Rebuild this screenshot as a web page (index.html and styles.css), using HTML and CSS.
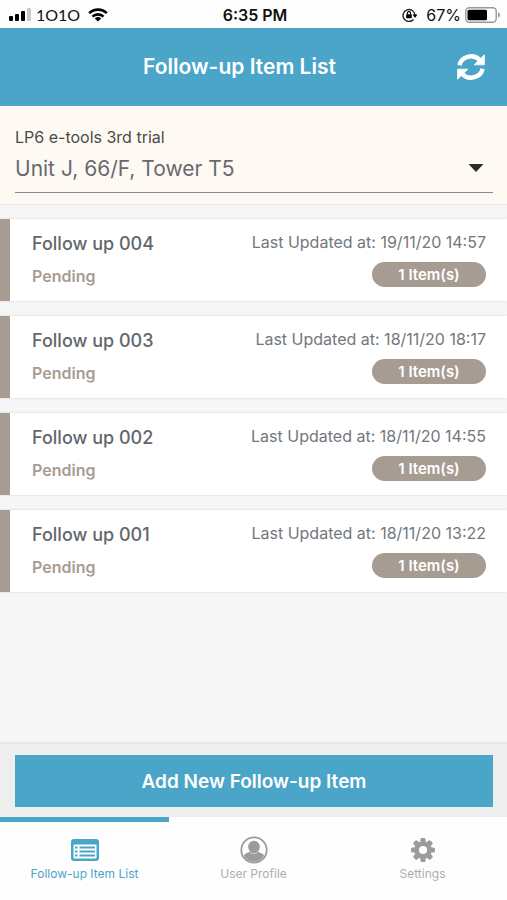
FILE: index.html
```html
<!DOCTYPE html>
<html lang="en">
<head>
<meta charset="utf-8">
<meta name="viewport" content="width=device-width, initial-scale=1">
<title>Follow-up Item List</title>
<link rel="stylesheet" href="styles.css">
</head>
<body>
<div class="app">
  <div class="status">
    <div class="status-side">
      <svg width="23" height="14" viewBox="0 0 23 14" aria-hidden="true"><rect x="0" y="8" width="4" height="5" rx="1"/><rect x="6" y="6" width="4" height="7" rx="1"/><rect x="12" y="3" width="4" height="10" rx="1"/><rect x="18" y="0" width="4" height="13" rx="1" fill="#c9c9c9"/></svg>
      <span class="carrier">1O1O</span>
      <svg class="wifi" width="20" height="14" viewBox="0 0 20 14" fill="none" stroke="#000" stroke-width="2.6" aria-hidden="true"><path d="M1.2 5.2C6 .4 14 .4 18.8 5.2"/><path d="M4.5 8.6c3-3 8-3 11 0"/><path d="M10 13.5 6.8 10.4c1.8-1.8 4.6-1.8 6.4 0z" fill="#000" stroke="none"/></svg>
    </div>
    <span class="time">6:35 PM</span>
    <div class="status-side status-end">
      <svg width="16" height="14" viewBox="0 0 16 14" aria-hidden="true"><path d="M11.5 11.5A6 6 0 1 1 13 7" fill="none" stroke="#222" stroke-width="1.4"/><path d="M10.5 6.5h5L13 10z"/><rect x="4.2" y="6.3" width="5.6" height="4" rx=".5"/><path d="M5.4 6.5V5.2a1.6 1.6 0 0 1 3.2 0v1.3" fill="none" stroke="#000" stroke-width="1.1"/></svg>
      <span class="percent">67%</span>
      <svg width="36" height="16" viewBox="0 0 36 16" aria-hidden="true"><rect x=".8" y=".8" width="30.4" height="14.4" rx="3.5" fill="#fff" stroke="#999" stroke-width="1.4"/><rect x="2.5" y="2.8" width="19.5" height="10.4" rx="1.5"/><path d="M33 5.5c2.6.8 2.6 4.2 0 5z" fill="#999"/></svg>
    </div>
  </div>

  <header class="header">
    <h1>Follow-up Item List</h1>
    <button class="refresh" type="button" aria-label="Refresh">
      <svg width="28" height="28" viewBox="0 0 28 28" fill="#fff" aria-hidden="true"><g id="half"><path d="M2.4 12.2A11.7 10.8 0 0 1 22.5 6.8" fill="none" stroke="#fff" stroke-width="4.4"/><path d="M27.4 1.8v10H17.2z" stroke="#fff" stroke-width=".8" stroke-linejoin="round"/></g><use href="#half" transform="rotate(180 14 14)"/></svg>
    </button>
  </header>

  <section class="filter">
    <label for="unit">LP6 e-tools 3rd trial</label>
    <div class="select">
      <select id="unit"><option>Unit J, 66/F, Tower T5</option></select>
      <svg class="caret" width="16" height="8" viewBox="0 0 16 8" aria-hidden="true"><path d="M.5 0h15L8 8z" fill="#2c2c2c"/></svg>
    </div>
  </section>

  <main class="list">
    <article class="card">
      <div class="line"><h2>Follow up 004</h2><span class="date">Last Updated at: 19/11/20 14:57</span></div>
      <div class="line"><span class="state">Pending</span><span class="badge">1 Item(s)</span></div>
    </article>
    <article class="card">
      <div class="line"><h2>Follow up 003</h2><span class="date">Last Updated at: 18/11/20 18:17</span></div>
      <div class="line"><span class="state">Pending</span><span class="badge">1 Item(s)</span></div>
    </article>
    <article class="card">
      <div class="line"><h2>Follow up 002</h2><span class="date">Last Updated at: 18/11/20 14:55</span></div>
      <div class="line"><span class="state">Pending</span><span class="badge">1 Item(s)</span></div>
    </article>
    <article class="card">
      <div class="line"><h2>Follow up 001</h2><span class="date">Last Updated at: 18/11/20 13:22</span></div>
      <div class="line"><span class="state">Pending</span><span class="badge">1 Item(s)</span></div>
    </article>
  </main>

  <div class="actions"><button class="add" type="button">Add New Follow-up Item</button></div>

  <nav class="tabs">
    <a class="tab active" href="#list" aria-current="page">
      <svg width="28" height="28" viewBox="0 0 28 28" aria-hidden="true"><rect x="0" y="3" width="28" height="22" rx="3" fill="#4aa5c9"/><rect x="2.5" y="8.5" width="23" height="14" rx="1" fill="#fff"/><path d="M4 11.5h2.5M4 15.5h2.5M4 19.5h2.5M8.5 11.5H24M8.5 15.5H24M8.5 19.5H24" stroke="#4aa5c9" stroke-width="2"/></svg>
      <span>Follow-up Item List</span>
    </a>
    <a class="tab" href="#profile">
      <svg width="28" height="28" viewBox="0 0 28 28" fill="#9b9b9b" aria-hidden="true"><circle cx="14" cy="14" r="12.7" fill="none" stroke="#9b9b9b" stroke-width="1.8"/><ellipse cx="14" cy="11" rx="5.8" ry="6.2"/><path d="M4 19.5c1-2.3 3.7-2.6 5.8-3.7 2.4 2.5 6 2.5 8.4 0 2.1 1.1 4.8 1.4 5.8 3.7-4.2 8.2-15.8 8.2-20 0z"/></svg>
      <span>User Profile</span>
    </a>
    <a class="tab" href="#settings">
      <svg width="28" height="28" viewBox="0 0 28 28" fill="#9b9b9b" aria-hidden="true"><g id="teeth"><rect x="11.4" y="2" width="5.2" height="24" rx="1.6"/><rect x="2" y="11.4" width="24" height="5.2" rx="1.6"/></g><use href="#teeth" transform="rotate(45 14 14)"/><circle cx="14" cy="14" r="8.8"/><circle cx="14" cy="14" r="4" fill="#fff"/></svg>
      <span>Settings</span>
    </a>
  </nav>
</div>
</body>
</html>
```

FILE: styles.css
```css
* { box-sizing: border-box; }

body {
  margin: 0;
  font-family: Inter, "Liberation Sans", sans-serif;
  color: #62676d;
  background: #f6f6f6;
}

h1, h2 { margin: 0; }
svg { display: block; flex: none; }
button, select { font: inherit; }

.app { display: flex; flex-direction: column; min-height: 100vh; }

.status {
  display: grid;
  grid-template-columns: 1fr auto 1fr;
  align-items: center;
  height: 28px;
  padding: 2px 6px 0 9px;
  background: #fdfdfd;
  color: #111;
}
.status-side { display: flex; align-items: center; gap: 4px; }
.status-end { justify-content: flex-end; }
.carrier { font-family: Lato, sans-serif; font-size: 16px; line-height: 20px; }
.wifi { margin-left: 4px; }
.time { font-size: 16px; font-weight: 600; line-height: 20px; }
.percent { margin-left: 4px; font-size: 16px; line-height: 20px; }

.header {
  display: flex;
  align-items: center;
  height: 78px;
  padding: 0 22px;
  background: #4aa5c9;
  color: #fff;
}
.header h1 { flex: 1; font-size: 21px; font-weight: 600; line-height: 28px; text-align: center; }
.refresh { padding: 0; border: 0; background: none; color: inherit; }

.filter {
  padding: 20px 14px 11px 15px;
  border-bottom: 1px solid #e9e8e4;
  background: #fefaf3;
}
.filter label { display: block; font-size: 16px; line-height: 22px; color: #4b4b4b; }
.select { position: relative; border-bottom: 1px solid #888; }
.select select {
  appearance: none;
  display: block;
  width: 100%;
  height: 44px;
  padding: 0 32px 4px 0;
  border: 0;
  background: none;
  font-size: 21px;
  color: #666a70;
}
.caret { position: absolute; right: 9px; top: 16px; pointer-events: none; }

.list { flex: 1; display: flex; flex-direction: column; gap: 15px; padding: 14px 0; }
.card {
  display: flex;
  flex-direction: column;
  gap: 4px;
  height: 82px;
  padding: 11px 21px 0 22px;
  border-left: 10px solid #a79c92;
  background: #fff;
  box-shadow: 0 0 2px #ccc;
}
.line { display: flex; justify-content: space-between; align-items: flex-start; }
.card h2 { font-size: 18px; font-weight: 500; line-height: 28px; }
.date { font-size: 16px; line-height: 24px; color: #73777d; }
.state { font-size: 16px; font-weight: 600; line-height: 28px; color: #a79c92; }
.badge {
  width: 114px;
  border-radius: 13px;
  background: #a79c92;
  color: #fff;
  font-size: 15px;
  font-weight: 600;
  line-height: 25px;
  text-align: center;
}

.actions { padding: 11px 14px 10px 15px; border-top: 2px solid #e6e6e6; background: #eee; }
.add {
  display: block;
  width: 100%;
  height: 52px;
  border: 0;
  background: #4aa5c9;
  color: #fff;
  font-size: 19px;
  font-weight: 600;
}

.tabs { display: grid; grid-template-columns: repeat(3, 1fr); height: 83px; background: #fefefe; }
.tab {
  display: flex;
  flex-direction: column;
  align-items: center;
  padding-top: 14px;
  border-top: 5px solid transparent;
  color: #adadad;
  font-size: 12px;
  line-height: 20px;
  text-decoration: none;
}
.tab.active { border-color: #4aa5c9; color: #4aa5c9; }
```
